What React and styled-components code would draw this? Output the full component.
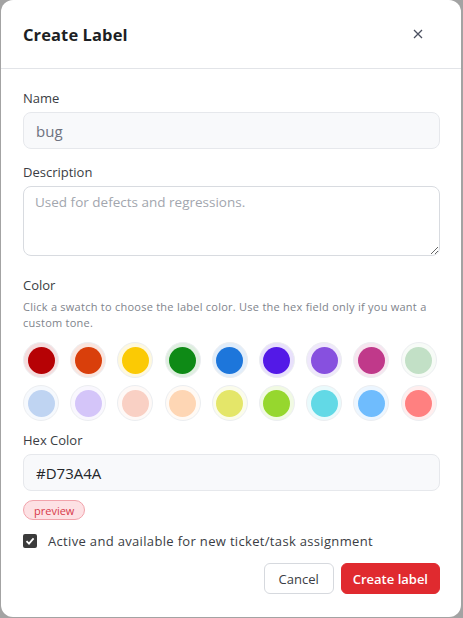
import styled, { createGlobalStyle } from "styled-components"

const Global = createGlobalStyle`
  html, body { margin: 0; padding: 0; background: #a3a3a3; }
  body { font-family: "Open Sans", "Liberation Sans", sans-serif; }
  * { box-sizing: border-box; }
`

const Dialog = styled.div`
  width: 460px;
  height: 617px;
  margin-left: 1px;
  background: #fff;
  border-radius: 12px;
  display: flex;
  flex-direction: column;
  overflow: hidden;
`

const Header = styled.div`
  height: 69px;
  padding: 0 22px;
  display: flex;
  align-items: center;
  justify-content: space-between;
  border-bottom: 1px solid #e2e4e8;
`

const Title = styled.h2`
  margin: 0;
  font-size: 16.5px;
  font-weight: 700;
  color: #1d1f24;
  letter-spacing: 0.1px;
`

const Close = styled.button`
  width: 20px;
  height: 20px;
  margin-right: 11px;
  border: 0;
  background: none;
  padding: 0;
  display: flex;
  align-items: center;
  justify-content: center;
  color: #4b5060;
`

const Body = styled.div`
  padding: 20px 21px 22px 22px;
  display: flex;
  flex-direction: column;
`

const Label = styled.label`
  font-size: 13px;
  line-height: 18px;
  font-weight: 500;
  color: #3a3d44;
  margin-top: ${(p) => p.gap || 0}px;
  margin-bottom: 5px;
`

const Input = styled.input`
  height: 37px;
  width: 100%;
  border: 1px solid #e6e8ec;
  border-radius: 8px;
  background: #f8f9fb;
  padding: 0 12px;
  font-family: inherit;
  font-size: 15px;
  color: ${(p) => (p.muted ? "#6e7280" : "#24262b")};
  outline: none;
`

const TextArea = styled.textarea`
  height: 70px;
  width: 100%;
  border: 1px solid #d8dbe0;
  border-radius: 8px;
  background: #fff;
  padding: 6px 11px;
  font-family: inherit;
  font-size: 13.5px;
  color: #24262b;
  outline: none;
  resize: vertical;
  &::placeholder { color: #a2a6ae; }
`

const Help = styled.p`
  margin: 0 0 11px;
  font-size: 11px;
  line-height: 16px;
  letter-spacing: 0.25px;
  color: #80848c;
`

const Swatches = styled.div`
  display: grid;
  grid-template-columns: repeat(9, 36px);
  column-gap: 11.2px;
  row-gap: 7px;
`

const Swatch = styled.button`
  width: 36px;
  height: 36px;
  border-radius: 50%;
  padding: 0;
  border: 1px solid #eceef1;
  background: ${(p) => p.color}22;
  display: flex;
  align-items: center;
  justify-content: center;
  cursor: pointer;
  &::after {
    content: "";
    width: 27px;
    height: 27px;
    border-radius: 50%;
    background: ${(p) => p.color};
  }
`

const Badge = styled.span`
  align-self: flex-start;
  margin-top: 9px;
  height: 20px;
  padding: 0 10px;
  display: inline-flex;
  align-items: center;
  border-radius: 10px;
  background: #fde1e4;
  border: 1px solid #f1a3ab;
  color: #d73a4a;
  font-size: 11px;
  font-weight: 500;
`

const CheckRow = styled.label`
  margin-top: 12px;
  display: flex;
  align-items: center;
  gap: 11px;
  font-size: 13px;
  letter-spacing: 0.33px;
  color: #3a3d44;
  line-height: 18px;
`

const Box = styled.span`
  width: 14px;
  height: 14px;
  border-radius: 2px;
  background: #3b3b3b;
  display: flex;
  align-items: center;
  justify-content: center;
`

const Actions = styled.div`
  margin-top: 13px;
  display: flex;
  justify-content: flex-end;
  gap: 7px;
`

const Button = styled.button`
  height: 31px;
  padding: 0 ${(p) => (p.primary ? 11 : 14)}px;
  border-radius: 6px;
  font-family: inherit;
  font-size: 13px;
  font-weight: ${(p) => (p.primary ? 600 : 500)};
  border: 1px solid ${(p) => (p.primary ? "#e02a2f" : "#d6d9de")};
  background: ${(p) => (p.primary ? "#e02a2f" : "#fff")};
  color: ${(p) => (p.primary ? "#fff" : "#3a3d44")};
`

const colors = [
  "#b60205", "#d93f0b", "#fbca04", "#0e8a16", "#1d76db", "#5319e7", "#8750df", "#c0398a", "#c2e0c6",
  "#bfd4f2", "#d4c5f9", "#f9d0c4", "#fed6b4", "#e4e669", "#96d72e", "#62d9e6", "#6fbcfd", "#ff8080",
]

const App = () => {
  return (
    <>
      <Global />
      <Dialog>
        <Header>
          <Title>Create Label</Title>
          <Close aria-label="close">
            <svg width="10" height="10" viewBox="0 0 10 10">
              <path d="M1 1L9 9M9 1L1 9" stroke="currentColor" strokeWidth="1.3" />
            </svg>
          </Close>
        </Header>
        <Body>
          <Label>Name</Label>
          <Input muted defaultValue="bug" />
          <Label gap={14}>Description</Label>
          <TextArea placeholder="Used for defects and regressions." />
          <Label gap={20}>Color</Label>
          <Help>Click a swatch to choose the label color. Use the hex field only if you want a custom tone.</Help>
          <Swatches>
            {colors.map((c) => (
              <Swatch key={c} color={c} />
            ))}
          </Swatches>
          <Label gap={10}>Hex Color</Label>
          <Input defaultValue="#D73A4A" />
          <Badge>preview</Badge>
          <CheckRow>
            <Box>
              <svg width="10" height="10" viewBox="0 0 10 10">
                <path d="M1.5 5.2L4 7.6L8.6 2.4" stroke="#fff" strokeWidth="1.8" fill="none" />
              </svg>
            </Box>
            Active and available for new ticket/task assignment
          </CheckRow>
          <Actions>
            <Button>Cancel</Button>
            <Button primary>Create label</Button>
          </Actions>
        </Body>
      </Dialog>
    </>
  )
}

export default App
